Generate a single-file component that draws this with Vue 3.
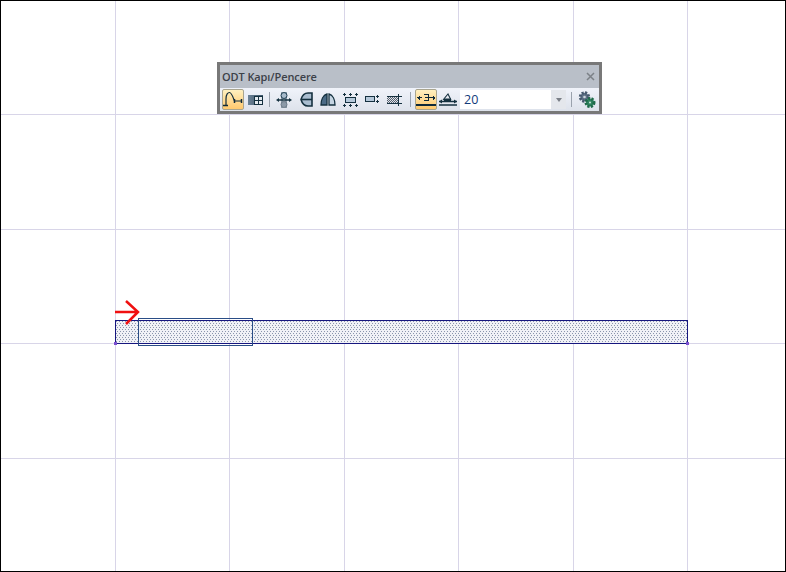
<template>
  <div class="screen">
    <svg class="drawing" width="784" height="570" viewBox="1 1 784 570" shape-rendering="crispEdges">
      <defs>
        <pattern id="hatch" x="116" y="321" width="3" height="4" patternUnits="userSpaceOnUse">
          <rect width="3" height="4" fill="#f0f1f6" />
          <rect x="0" y="0" width="1" height="1" fill="#8b95ad" />
          <rect x="1" y="2" width="1" height="1" fill="#8b95ad" />
        </pattern>
        <pattern id="iconHatch" width="2" height="2" patternUnits="userSpaceOnUse">
          <rect width="2" height="2" fill="#dfe3ea" />
          <rect width="1" height="1" fill="#56616f" />
          <rect x="1" y="1" width="1" height="1" fill="#56616f" />
        </pattern>
      </defs>
      <g stroke="#d8d5e8" stroke-width="1">
        <line v-for="x in gridX" :key="'x' + x" :x1="x + 0.5" y1="0" :x2="x + 0.5" y2="572" />
        <line v-for="y in gridY" :key="'y' + y" x1="0" :y1="y + 0.5" x2="786" :y2="y + 0.5" />
      </g>
      <rect x="115.5" y="320.5" width="572" height="23" fill="url(#hatch)" stroke="#16167f" />
      <rect x="138.5" y="318.5" width="114" height="27" fill="none" stroke="#2a4d86" />
      <rect x="114" y="342" width="3" height="3" fill="#7b4fd0" />
      <rect x="686" y="342" width="3" height="3" fill="#7b4fd0" />
      <path class="arrow" d="M115 312H138M126 301L138 312L126 324" />
    </svg>

    <div class="palette">
      <div class="title">
        <span>ODT Kapı/Pencere</span>
        <svg class="close" width="9" height="9" viewBox="0 0 9 9">
          <path d="M1 1L8 8M8 1L1 8" stroke="#7c8187" stroke-width="1.500" fill="none" />
        </svg>
      </div>
      <div class="tools">
        <button class="tool on first">
          <svg width="20" height="17" viewBox="0 0 20 17">
            <path d="M3 14V8C3 3 5 1.500 6.500 1.500C8.500 1.500 9.500 5 11.500 10H18" fill="none" stroke="#0f2a3a" stroke-width="1.200" />
            <path d="M0 14.500H5M11.500 8V12M18.500 8V12" fill="none" stroke="#0f2a3a" stroke-width="1.500" />
          </svg>
        </button>
        <button class="tool">
          <svg width="15" height="10" viewBox="0 0 15 10">
            <defs>
              <linearGradient id="wall">
                <stop offset="0" stop-color="#6c8296" />
                <stop offset="1" stop-color="#3c5468" />
              </linearGradient>
            </defs>
            <rect width="15" height="10" fill="url(#wall)" />
            <rect x="6.500" y="1.500" width="8" height="8" fill="#e4eaf0" stroke="#14303f" />
            <path d="M10.500 2V9M7 5.500H14" stroke="#14303f" />
          </svg>
        </button>
        <i class="sep"></i>
        <button class="tool">
          <svg width="16" height="16" viewBox="0 0 16 16">
            <path d="M6 0V16M10 0V16" stroke="#1d3c50" stroke-width="0.900" fill="none" />
            <circle cx="8" cy="3.500" r="3" fill="#a7bacb" stroke="#1d3c50" />
            <circle cx="8" cy="12.500" r="3" fill="#8c9aa8" stroke="#6c7a88" />
            <path d="M2 8H14" stroke="#14303f" stroke-width="1.500" fill="none" />
            <path d="M0 8L3 6V10ZM16 8L13 6V10Z" fill="#14303f" />
          </svg>
        </button>
        <button class="tool">
          <svg width="13" height="15" viewBox="0 0 13 15">
            <path d="M12 1V14H8C4 14 2 11 1 7.500C2 4 4 1 8 1Z" fill="#a9bdd0" stroke="#14303f" stroke-width="1.600" />
            <path d="M1 7.500H12" stroke="#14303f" stroke-width="1.600" />
          </svg>
        </button>
        <button class="tool">
          <svg width="16" height="13" viewBox="0 0 16 13">
            <path d="M7 1V12H1C1 7 3 2 7 1Z" fill="#4a6a85" stroke="#14303f" stroke-width="1.300" />
            <path d="M9 1V12H15C15 7 13 2 9 1Z" fill="#c4d4e2" stroke="#14303f" stroke-width="1.300" />
          </svg>
        </button>
        <button class="tool">
          <svg width="15" height="14" viewBox="0 0 15 14" shape-rendering="crispEdges">
            <rect x="2.500" y="4.500" width="10" height="5" fill="#b5c8da" stroke="#14303f" />
            <path d="M0 1.500H3M6 1.500H9M12 1.500H15M0 12.500H3M6 12.500H9M12 12.500H15M1.500 0V3M7.500 0V3M13.500 0V3M1.500 11V14M7.500 11V14M13.500 11V14" stroke="#14303f" fill="none" />
          </svg>
        </button>
        <button class="tool">
          <svg width="14" height="9" viewBox="0 0 14 9" shape-rendering="crispEdges">
            <rect x="0.500" y="1.500" width="9" height="5" fill="#b5c8da" stroke="#14303f" />
            <path d="M11 1.500H14M12.500 0V3M11 6.500H14M12.500 5V8" stroke="#14303f" fill="none" />
          </svg>
        </button>
        <button class="tool">
          <svg width="15" height="12" viewBox="0 0 15 12" shape-rendering="crispEdges">
            <rect x="0" y="2" width="12" height="8" fill="url(#iconHatch)" />
            <path d="M0 2.500H15M0 9.500H15M11.500 0V12" stroke="#14303f" fill="none" />
          </svg>
        </button>
        <i class="sep second"></i>
        <button class="tool on">
          <svg width="20" height="14" viewBox="0 0 20 14" shape-rendering="crispEdges">
            <path d="M1 4.500H6M11 4.500H19M3 2.500V6.500M2 3.500V5.500M17 2.500V6.500M18 3.500V5.500M8 1.500H12V7.500H8M9 4.500H12" fill="none" stroke="#0f2a3a" />
            <rect x="0" y="11" width="20" height="2" fill="#0f2a3a" />
          </svg>
        </button>
        <button class="tool">
          <svg width="18" height="13" viewBox="0 0 18 13">
            <path d="M4 7L9 1L12 7" fill="none" stroke="#14303f" stroke-width="1.100" />
            <rect x="5" y="5.500" width="7" height="2.500" fill="#14303f" />
            <path d="M0 8.500H18M0 12H18" stroke="#14303f" stroke-width="1.300" fill="none" />
            <path d="M0 8.500L3 6.500V10.500ZM18 8.500L15 6.500V10.500Z" fill="#14303f" />
          </svg>
        </button>
        <div class="combo">
          <span class="value">20</span>
          <span class="drop"><b></b></span>
        </div>
        <i class="sep third"></i>
        <button class="tool gears">
          <svg width="18" height="17" viewBox="0 0 18 17">
            <circle cx="6.500" cy="6" r="4.200" fill="#5d7086" stroke="#46586e" stroke-width="3" stroke-dasharray="2 1.300" />
            <circle cx="6.500" cy="6" r="1.300" fill="#cdd5de" />
            <circle cx="12" cy="11.500" r="4" fill="#2f8560" stroke="#1f6b4a" stroke-width="3" stroke-dasharray="2 1.300" />
            <circle cx="12" cy="11.500" r="1" fill="#cfe6da" />
          </svg>
        </button>
      </div>
    </div>
  </div>
</template>

<script setup>
const gridX = [115, 229, 344, 458, 573, 687]
const gridY = [114, 229, 343, 458]
</script>

<style>
html, body {
  margin: 0;
  background: #fff;
}
</style>

<style scoped>
.screen {
  position: relative;
  width: 784px;
  height: 570px;
  border: 1px solid #000;
  background: #fff;
  overflow: hidden;
}

.drawing {
  display: block;
}

.arrow {
  fill: none;
  stroke: #f01010;
  stroke-width: 2.5;
  shape-rendering: auto;
}

.palette {
  position: absolute;
  left: 216px;
  top: 61px;
  width: 379px;
  height: 46px;
  border: 3px solid #787878;
  background: #b9bfc8;
  font-family: "Open Sans", "Liberation Sans", sans-serif;
}

.title {
  display: flex;
  align-items: center;
  justify-content: space-between;
  height: 23px;
  padding: 0 4px 0 2px;
  font-size: 11px;
  font-weight: 600;
  letter-spacing: -0.1px;
  color: #3c4148;
}

.tools {
  display: flex;
  align-items: center;
  height: 23px;
  background: linear-gradient(#f0f3fa, #dde2eb);
}

.tool {
  display: flex;
  flex: none;
  align-items: center;
  justify-content: center;
  width: 22px;
  height: 21px;
  padding: 0;
  border: 1px solid transparent;
  border-radius: 2px;
  background: none;
}

.tool.first {
  margin-left: 2px;
}

.tool.on {
  border-color: #a9a58f;
  background: linear-gradient(#fff0c0, #ffc96e);
}

.gears {
  width: 18px;
  border: 0;
}

.sep {
  flex: none;
  width: 1px;
  height: 15px;
  margin: 0 3px;
  background: #9aa2ad;
}

.sep.second {
  margin: 0 4px 0 5px;
}

.sep.third {
  margin: 0 6px 0 5px;
}

.combo {
  display: flex;
  flex: none;
  align-items: center;
  justify-content: space-between;
  width: 106px;
  height: 19px;
  margin-left: 1px;
  background: #fff;
}

.value {
  padding-left: 4px;
  font-size: 12.5px;
  color: #123a7a;
}

.drop {
  display: flex;
  align-items: center;
  justify-content: center;
  width: 15px;
  height: 19px;
  background: #e4e7ec;
}

.drop b {
  width: 0;
  height: 0;
  border: 3px solid transparent;
  border-top: 4px solid #7a7f87;
  border-bottom: 0;
}
</style>
